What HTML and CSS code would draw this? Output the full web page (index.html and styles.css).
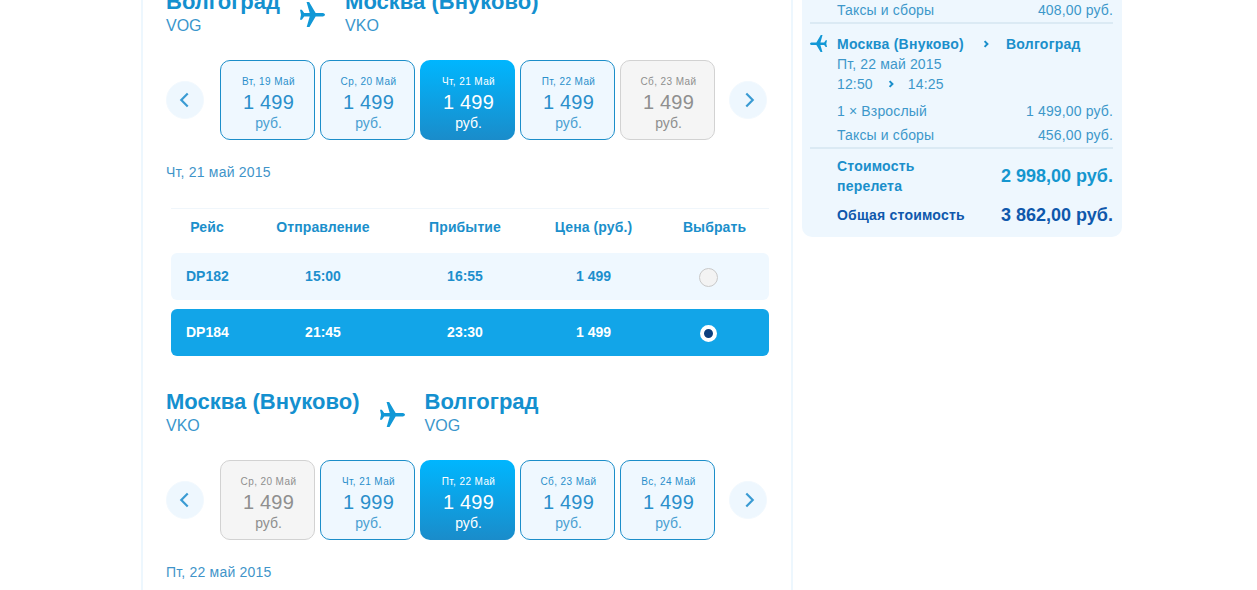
FILE: index.html
```html
<!DOCTYPE html>
<html lang="ru">
<head>
<meta charset="utf-8">
<title>Выбор рейса</title>
<link rel="stylesheet" href="styles.css">
</head>
<body>
<svg class="defs" width="0" height="0" aria-hidden="true">
  <symbol id="plane" viewBox="0 0 24 24">
    <path d="M24 12.300c0-1.200-1.500-1.800-3-1.800h-6L8.800 0H6.300l3 10.500H4L1.800 7.500H0l1 4.800-1 4.800h1.800L4 14h5.300l-3 10.500h2.500L15 14h6c1.500 0 3-.5 3-1.700z"/>
  </symbol>
  <symbol id="chev" viewBox="0 0 10 14">
    <path d="M2.500 2l5 5-5 5" fill="none" stroke="currentColor"/>
  </symbol>
</svg>
<div class="page">
  <main class="main">
    <section class="leg">
      <header class="route">
        <div class="place place-first"><div class="city">Волгоград</div><div class="code">VOG</div></div>
        <svg class="route-plane"><use href="#plane"/></svg>
        <div class="place"><div class="city">Москва (Внуково)</div><div class="code">VKO</div></div>
      </header>
      <div class="dates">
        <button class="nav"><svg class="nav-icon flip"><use href="#chev"/></svg></button>
        <div class="day"><div class="day-date">Вт, 19 Май</div><div class="day-price">1 499</div><div class="day-cur">руб.</div></div>
        <div class="day"><div class="day-date">Ср, 20 Май</div><div class="day-price">1 499</div><div class="day-cur">руб.</div></div>
        <div class="day day-active"><div class="day-date">Чт, 21 Май</div><div class="day-price">1 499</div><div class="day-cur">руб.</div></div>
        <div class="day"><div class="day-date">Пт, 22 Май</div><div class="day-price">1 499</div><div class="day-cur">руб.</div></div>
        <div class="day day-off"><div class="day-date">Сб, 23 Май</div><div class="day-price">1 499</div><div class="day-cur">руб.</div></div>
        <button class="nav nav-next"><svg class="nav-icon"><use href="#chev"/></svg></button>
      </div>
      <div class="date-label">Чт, 21 май 2015</div>
      <div class="flights">
        <div class="grid flights-head">
          <div>Рейс</div><div>Отправление</div><div>Прибытие</div><div>Цена (руб.)</div><div>Выбрать</div>
        </div>
        <div class="grid flight">
          <div class="fno">DP182</div><div>15:00</div><div>16:55</div><div>1 499</div><div><span class="radio"></span></div>
        </div>
        <div class="grid flight flight-on">
          <div class="fno">DP184</div><div>21:45</div><div>23:30</div><div>1 499</div><div><span class="radio radio-on"></span></div>
        </div>
      </div>
    </section>
    <section class="leg">
      <header class="route">
        <div class="place place-first"><div class="city">Москва (Внуково)</div><div class="code">VKO</div></div>
        <svg class="route-plane"><use href="#plane"/></svg>
        <div class="place"><div class="city">Волгоград</div><div class="code">VOG</div></div>
      </header>
      <div class="dates">
        <button class="nav"><svg class="nav-icon flip"><use href="#chev"/></svg></button>
        <div class="day day-off"><div class="day-date">Ср, 20 Май</div><div class="day-price">1 499</div><div class="day-cur">руб.</div></div>
        <div class="day"><div class="day-date">Чт, 21 Май</div><div class="day-price">1 999</div><div class="day-cur">руб.</div></div>
        <div class="day day-active"><div class="day-date">Пт, 22 Май</div><div class="day-price">1 499</div><div class="day-cur">руб.</div></div>
        <div class="day"><div class="day-date">Сб, 23 Май</div><div class="day-price">1 499</div><div class="day-cur">руб.</div></div>
        <div class="day"><div class="day-date">Вс, 24 Май</div><div class="day-price">1 499</div><div class="day-cur">руб.</div></div>
        <button class="nav nav-next"><svg class="nav-icon"><use href="#chev"/></svg></button>
      </div>
      <div class="date-label">Пт, 22 май 2015</div>
    </section>
  </main>
  <aside class="side">
    <div class="line"><span>Таксы и сборы</span><span>408,00 руб.</span></div>
    <div class="trip">
      <svg class="trip-plane"><use href="#plane"/></svg>
      <div class="trip-route"><span class="trip-from">Москва (Внуково)</span><svg class="trip-chev"><use href="#chev"/></svg><span>Волгоград</span></div>
      <div class="trip-text">Пт, 22 май 2015</div>
      <div class="trip-text trip-times"><span>12:50</span><svg class="time-chev"><use href="#chev"/></svg><span>14:25</span></div>
    </div>
    <div class="line"><span>1 × Взрослый</span><span>1 499,00 руб.</span></div>
    <div class="line"><span>Таксы и сборы</span><span>456,00 руб.</span></div>
    <div class="sum sum-flight"><span class="sum-label">Стоимость<br>перелета</span><span class="sum-value">2 998,00 руб.</span></div>
    <div class="sum sum-total"><span class="sum-label">Общая стоимость</span><span class="sum-value">3 862,00 руб.</span></div>
  </aside>
</div>
</body>
</html>
```
FILE: styles.css
```css
* { box-sizing: border-box; }
html, body { margin: 0; padding: 0; height: 590px; overflow: hidden; background: #fff; }
body { font-family: "Liberation Sans", Arial, sans-serif; color: #1b8fd0; }
.defs { position: absolute; }
.page { display: flex; align-items: flex-start; gap: 9px; padding-left: 141px; height: 590px; overflow: hidden; }

.main { flex: none; width: 652px; height: 640px; margin-top: -11px; padding: 0 20px 0 23px; border-left: 2px solid #edf7fe; border-right: 2px solid #edf7fe; }
.leg { display: flex; flex-direction: column; }
.route { display: flex; align-items: flex-start; height: 46px; }
.place-first { margin-right: 20px; }
.city { font-size: 22px; line-height: 26px; font-weight: 700; color: #1490cf; white-space: nowrap; letter-spacing: .02px; }
.code { font-size: 16px; line-height: 22px; color: #3a96cc; }
.route-plane { flex: none; width: 25px; height: 25px; margin: 13px 20px 0 0; fill: #1298d6; }

.dates { display: flex; align-items: center; gap: 5px; height: 80px; margin-top: 25px; }
.nav { flex: none; width: 38px; height: 38px; margin-right: 11px; padding: 0 2px 0 0; border: 1px solid #f2f9fe; border-radius: 50%; background: #eef7fe; color: #3a9bd3; display: flex; align-items: center; justify-content: center; }
.nav-next { margin: 0 0 0 9px; padding: 0 0 0 2px; }
.nav-icon { width: 13px; height: 18px; stroke-width: 1.7; }
.flip { transform: scaleX(-1); }

.day { flex: none; width: 95px; height: 80px; padding: 15px 0 0 2px; border: 1px solid #1c8ec9; border-radius: 10px; background: #eff8ff; color: #2a8fcb; text-align: center; }
.day-date { font-size: 10px; line-height: 12px; letter-spacing: .4px; }
.day-price { font-size: 20px; line-height: 24px; margin-top: 2px; letter-spacing: .2px; }
.day-cur { font-size: 14px; line-height: 18px; color: #4a9fd2; }
.day-active { border: 0; padding-top: 16px; color: #fff; background: linear-gradient(#00b6fe, #1a8cca); }
.day-active .day-cur { color: #fff; }
.day-off { border-color: #d2d2d2; background: #f5f5f5; color: #8f8f8f; }
.day-off .day-cur { color: #8f8f8f; }

.date-label { font-size: 14px; line-height: 16px; margin-top: 24px; color: #3f94c9; letter-spacing: .2px; }

.flights { margin: 28px 0 24px 5px; width: 598px; border-top: 1px solid #f0f6fb; }
.grid { display: grid; grid-template-columns: 72px 160px 124px 133px 1fr; align-items: center; text-align: center; font-size: 14px; font-weight: 700; }
.flights-head { height: 36px; padding-bottom: 1px; letter-spacing: .1px; color: #1b8fcb; margin-bottom: 8px; }
.flight { height: 47px; margin-bottom: 9px; border-radius: 6px; background: #eff8ff; color: #1d8fcd; padding-bottom: 1px; }
.flight-on { background: #12a5e8; color: #fff; }
.fno { text-align: left; padding-left: 15px; }
.radio { display: block; width: 19px; height: 19px; margin: 3px 0 0 39px; border-radius: 50%; border: 1px solid #c9c9c9; background: #f3f3f3; }
.radio-on { width: 17px; height: 17px; margin: 3px 0 0 40px; border: 4px solid #fff; background: #0d3f7e; }

.side { flex: none; width: 320px; margin-top: -28px; padding: 26px 9px 10px 35px; border-radius: 0 0 10px 10px; background: #eef7fe; font-size: 14px; letter-spacing: .15px; color: #3d97ca; }
.line { display: flex; justify-content: space-between; align-items: center; height: 24px; }
.trip { position: relative; height: 77px; margin-left: -27px; padding-left: 27px; border-top: 2px solid #dbeaf4; }
.trip-plane { position: absolute; left: 0; top: 11px; width: 17px; height: 17px; fill: #1298d6; transform: scaleX(-1); }
.trip-route { display: flex; align-items: center; height: 20px; margin-top: 10px; font-weight: 700; letter-spacing: .25px; color: #1b8fcb; }
.trip-from { width: 146px; }
.trip-chev { width: 6px; height: 8px; margin-right: 17px; stroke-width: 3.5; color: #1b8fcb; }
.trip-text { line-height: 20px; }
.trip-times { display: flex; align-items: center; height: 20px; }
.time-chev { width: 6px; height: 8px; margin: 0 14px 0 15px; stroke-width: 3.5; color: #1b8fcb; }
.sum { display: flex; justify-content: space-between; align-items: center; font-weight: 700; letter-spacing: .2px; color: #1b8fcb; }
.sum-flight { height: 56px; margin-left: -27px; padding-left: 27px; border-top: 2px solid #dbeaf4; }
.sum-label { line-height: 20px; }
.sum-value { font-size: 18px; letter-spacing: 0; color: #1596cf; white-space: nowrap; }
.sum-total { height: 24px; color: #0f58ac; }
.sum-total .sum-value { color: #0f58ac; }
```
